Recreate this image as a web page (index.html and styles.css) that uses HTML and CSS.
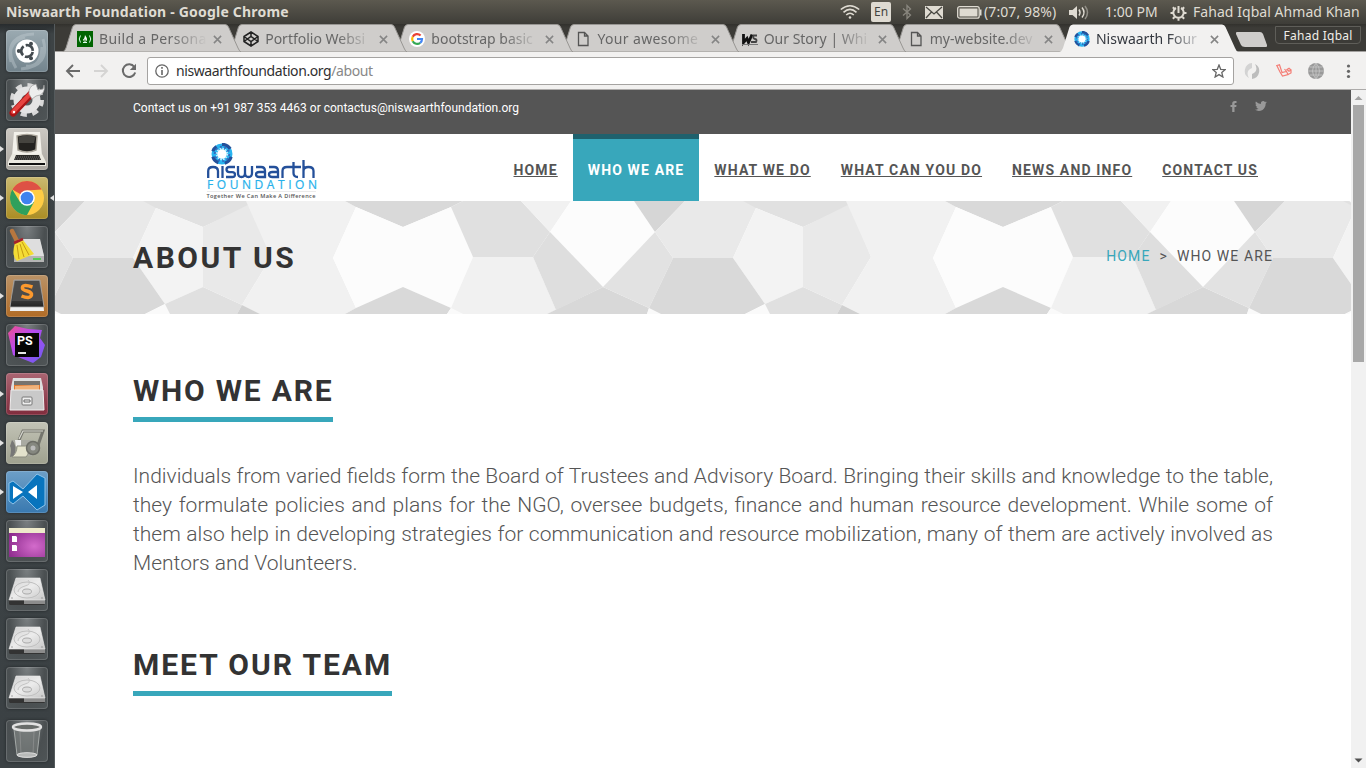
FILE: index.html
```html
<!DOCTYPE html>
<html lang="en">
<head>
<meta charset="utf-8">
<title>Niswaarth Foundation</title>
<link rel="stylesheet" href="styles.css">
</head>
<body>
<svg class="defs" width="0" height="0" aria-hidden="true">
  <defs>
    <linearGradient id="metal" x1="0" y1="0" x2="1" y2="1"><stop offset="0" stop-color="#cfcfcf"/><stop offset=".5" stop-color="#ececec"/><stop offset="1" stop-color="#c6c6c6"/></linearGradient>
    <linearGradient id="dark" x1="0" y1="0" x2="0" y2="1"><stop offset="0" stop-color="#777"/><stop offset="1" stop-color="#222"/></linearGradient>
    <radialGradient id="purple" cx=".7" cy=".6" r=".8"><stop offset="0" stop-color="#d36bcb"/><stop offset="1" stop-color="#8b2a8c"/></radialGradient>
    <linearGradient id="storm" x1="0" y1="0" x2="1" y2="1"><stop offset="0" stop-color="#f0508c"/><stop offset=".4" stop-color="#b84af0"/><stop offset="1" stop-color="#6a5cf0"/></linearGradient>
    <symbol id="tab" viewBox="0 0 180 28"><path d="M.5 28 Q3 27 4 24 L10.500 3 Q11.500 .5 14 .5 H163 Q165.500 .5 166.500 3 L176 24 Q177.500 27.500 179 28Z"/></symbol>
    <symbol id="close" viewBox="0 0 10 10"><path d="M1 1 9 9M9 1 1 9" stroke="#858585" stroke-width="1.700"/></symbol>
    <symbol id="page" viewBox="0 0 16 16"><path d="M3.500 1.500h6l3.500 3.500v9.500h-9.500zM9.500 1.500v3.500h3.500" fill="none" stroke="#555" stroke-width="1.300"/></symbol>
    <symbol id="ring" viewBox="0 0 24 24"><circle cx="12" cy="12" r="8.200" fill="none" stroke="#28b4f0" stroke-width="6.500"/><path d="M12 1.500A10.500 10.500 0 0 1 21 6.500M22 15A10.500 10.500 0 0 1 15 22M8 21.500A10.500 10.500 0 0 1 2 15M2 9A10.500 10.500 0 0 1 6 4" fill="none" stroke="#24519b" stroke-width="3.500"/><circle cx="12" cy="12" r="7.500" fill="none" stroke="#2f6dc0" stroke-width="3" stroke-dasharray="2 2.700"/><circle cx="12" cy="12" r="5.800" fill="none" stroke="#c0effc" stroke-width="2" stroke-dasharray="1.800 1.200"/><circle cx="12" cy="12" r="4.900" fill="#fff"/></symbol>
    <symbol id="disk" viewBox="0 0 42 42"><path d="M3 30H39V35L38 36H4L3 35z" fill="#333"/><path d="M18 31H39V35H18z" fill="#8c8c8c"/><path d="M10 9H34L39 31H3z" fill="url(#metal)" stroke="#eee" stroke-width=".6"/><ellipse cx="21" cy="21" rx="13" ry="8" fill="none" stroke="#c0c0c0"/><ellipse cx="21" cy="22.500" rx="4.500" ry="2.500" fill="#ddd" stroke="#aaa"/><path d="M22 11q4 4-3 6t-7 6" fill="none" stroke="#c4c4c4"/><circle cx="6" cy="29" r=".7" fill="#888"/><circle cx="36" cy="29" r=".7" fill="#888"/></symbol>
    <g id="tile">
      <path fill="#e9e9e9" d="M30 0H103L101 7 78 57H18L0 31Z"/>
      <path fill="#e1e1e1" d="M88 0H196L195 5 148 26 101 7Z"/>
      <path fill="#f3f3f3" d="M101 7 148 26V86L110 103 78 57Z"/>
      <path fill="#d9d9d9" d="M18 57H78L110 103 90 113H6L-6 107Z"/>
      <path fill="#fafafa" d="M110 103 90 113H118Z"/>
      <path fill="#e0e0e0" d="M148 86 110 103 115 113H182L187 104Z"/>
      <path fill="#e9e9e9" d="M148 26 195 3 216 56 187 104 148 86Z"/>
      <path fill="#f1f1f1" d="M191 0H290L301 6 278 57 301 107 290 113H205L187 104 216 56Z"/>
      <path fill="#d1d1d1" d="M187 104 205 113H182Z"/>
      <path fill="#d9d9d9" d="M290 0H408L396 6 348 26 301 6Z"/>
      <path fill="#fcfcfc" d="M301 6 348 26 396 6 418 56 396 107 348 86 301 107 278 57Z"/>
      <path fill="#d9d9d9" d="M348 86 396 107 392 113H290L301 107Z"/>
      <path fill="#fafafa" d="M396 107 392 113H408Z"/>
      <path fill="#e0e0e0" d="M408 0H466L495 31 478 56H418L396 6Z"/>
      <path fill="#f1f1f1" d="M466 0H516L495 31ZM418 56H478L501 109 492 113H408L396 107Z"/>
      <path fill="#fcfcfc" d="M516 0H579L600 31 548 86 495 31Z"/>
      <path fill="#dedede" d="M495 31 548 86 501 109 478 56Z"/>
      <path fill="#d8d8d8" d="M548 86 594 107 592 113H492Z"/>
      <path fill="#e2e2e2" d="M600 31 618 57 594 107 548 86Z"/>
      <path fill="#d6d6d6" d="M579 0H630L600 31Z"/>
      <path fill="#fafafa" d="M594 107 606 113H592Z"/>
    </g>
  </defs>
</svg>
<div class="desktop">
  <header class="panel">
    <span class="panel-title">Niswaarth Foundation - Google Chrome</span>
    <div class="tray">
      <svg class="t-wifi" width="20" height="16" viewBox="0 0 20 16" fill="none" stroke="#dfdbd2" stroke-width="1.600"><path d="M.8 5.500Q10-2 19.200 5.500M3.500 8.300Q10 2.500 16.500 8.300M6.200 11Q10 7.500 13.800 11"/><circle cx="10" cy="13.500" r="1.300" fill="#dfdbd2" stroke="none"/></svg>
      <span class="t-lang">En</span>
      <svg class="t-bt" width="10" height="16" viewBox="0 0 10 16" fill="none" stroke="#8a877f" stroke-width="1.300"><path d="M1 4.500 8.500 11 5 14.500V1.500L8.500 5 1 11.500"/></svg>
      <svg class="t-mail" width="18" height="13" viewBox="0 0 18 13"><path fill="#dfdbd2" d="M0 0H18V13H0z"/><path d="M1 1 9 8 17 1M1 12 6.500 6M17 12 11.500 6" fill="none" stroke="#4a4943" stroke-width="1.300"/></svg>
      <svg class="t-bat" width="25" height="13" viewBox="0 0 25 13"><rect x=".7" y=".7" width="21.500" height="11.500" rx="2" fill="none" stroke="#dfdbd2" stroke-width="1.300"/><path fill="#dfdbd2" d="M2.500 2.500H20.500V10.500H2.500zM23 3.500h1.500v6H23z"/></svg>
      <span class="t-charge">(7:07, 98%)</span>
      <svg class="t-vol" width="20" height="15" viewBox="0 0 20 15"><path fill="#dfdbd2" d="M0 5h3.500L8 1v13L3.500 10H0z"/><path d="M10 4.500q2 3 0 6M13 2.500q4 5 0 10" fill="none" stroke="#dfdbd2" stroke-width="1.500"/><path d="M16 1q5 6.500 0 13" fill="none" stroke="#918e86" stroke-width="1.500"/></svg>
      <span class="t-time">1:00 PM</span>
      <svg class="t-gear" width="17" height="17" viewBox="0 0 17 17" fill="none" stroke="#dfdbd2"><path stroke-width="2" d="M6 4A5.200 5.200 0 1 0 11 4M8.500 2V9"/><path stroke-width="2" d="M.5 9H3M14 9h2.500M8.500 14.300v2.500M2.800 3.300 4.600 5M14.200 3.300 12.400 5M2.800 14.700 4.600 13M14.200 14.700 12.400 13"/></svg>
      <span class="t-user">Fahad Iqbal Ahmad Khan</span>
    </div>
  </header>

  <aside class="launcher">
    <div class="app dash"><svg viewBox="0 0 42 42"><path d="M5 32Q-1 5 28 4M10 38Q-4 14 19 7M37 9Q45 36 15 39M36 17Q35 38 20 36" stroke="#c6d0d4" stroke-width="3" opacity=".4" fill="none"/><circle cx="21" cy="21" r="11.500" fill="#fff"/><circle cx="21" cy="21" r="5.800" fill="none" stroke="#444b50" stroke-width="2.700" stroke-dasharray="10 2.150" transform="rotate(10 21 21)"/><g fill="#444b50"><circle cx="12.800" cy="21" r="2"/><circle cx="25" cy="13.800" r="2"/><circle cx="25" cy="28.200" r="2"/></g></svg></div>
    <div class="app"><svg viewBox="0 0 42 42"><circle cx="21" cy="21" r="14.500" fill="none" stroke="#d8d8d8" stroke-width="5" stroke-dasharray="6 5.390"/><circle cx="21" cy="21" r="9.500" fill="none" stroke="#e4e4e4" stroke-width="8"/><path d="M7 34 26 14" stroke="#a91516" stroke-width="7" stroke-linecap="round"/><path d="M7 33 25 14" stroke="#e74440" stroke-width="4" stroke-linecap="round"/><path d="M23 15Q22 7 30 5l2 6 5-1 1-4Q40 16 30 17l-4 3z" fill="#eee" stroke="#999" stroke-width=".7"/><circle cx="8" cy="33" r="1.200" fill="#fff"/></svg></div>
    <div class="app run silver"><svg viewBox="0 0 42 42"><path d="M8 4H34L36 28H6z" fill="#f3f1ea"/><path d="M11 8Q21 5 31 8L30 22Q21 26 12 22z" fill="#23221f" stroke="#aaa59a" stroke-width="1.500"/><path d="M12.500 9Q21 6.500 29.500 9L28 15H13z" fill="#45443f"/><path d="M6 26H36L40 34V38H2V34z" fill="#ebe9e0"/><path d="M10 27H33L35 32H8z" fill="#2e2d29"/><path d="M3 36H39" stroke="#111" stroke-width="2"/><path d="M10 29h24M9 31h26" stroke="#666" stroke-dasharray="1 1"/></svg></div>
    <div class="app run focus gold"><svg viewBox="0 0 42 42"><circle cx="21" cy="21" r="17" fill="#fc4"/><path d="M21 21 6.300 12.500A17 17 0 0 1 35.700 12.500L21 13.500z" fill="#de5145"/><path d="M6.300 12.500A17 17 0 0 0 21 38L28 25 14 25z" fill="#2fa05c"/><circle cx="21" cy="21" r="7.800" fill="#fff"/><circle cx="21" cy="21" r="6.300" fill="#3f82ee"/></svg></div>
    <div class="app"><svg viewBox="0 0 42 42"><path d="M9 15H34L38 30V36H8z" fill="#b5b5b5"/><path d="M9 13H34L38 30H9z" fill="#dedede"/><path d="M27 32h8v2h-8z" fill="#5c5"/><path d="M6 5 12 17" stroke="#b7773f" stroke-width="4.500" stroke-linecap="round"/><path d="M9 17 17 14 28 28 11 35Q5 30 9 17z" fill="#f4dc35"/><path d="M11 19 13 33M14 18 18 31M16 16 23 29" stroke="#c49a13"/><path d="M8 17 17 13" stroke="#a4212b" stroke-width="2.500"/></svg></div>
    <div class="app run orange"><svg viewBox="0 0 42 42"><path d="M5 25 4 36H38L37 25z" fill="#eee"/><path d="M8 5H34L38 32H4z" fill="url(#dark)" stroke="#aaa" stroke-width=".8"/><path d="M9 6H33L36 26H6z" fill="#4b4b4b"/><path d="M26.500 12Q15.500 8.500 16.500 13.500Q17 15 21 16Q26 17.500 25.500 20Q24 24.500 15.500 21" fill="none" stroke="#fb982d" stroke-width="3.500"/></svg></div>
    <div class="app"><svg viewBox="0 0 42 42"><path d="M2 9 9 2 22 5 36 6 34 14 39 21 35 33 27 39 7 31z" fill="url(#storm)"/><path d="M9 9H33V33H9z" fill="#050505"/><path d="M12 29H20" stroke="#fff" stroke-width="1.800"/><text class="ps" x="11" y="21">PS</text></svg></div>
    <div class="app run red"><svg viewBox="0 0 42 42"><path d="M7 5H35L37 14V37H5V14z" fill="#ddd"/><path d="M8 8H34V17H8z" fill="#77736e"/><path d="M8 12H34V18H8z" fill="#df762e"/><path d="M9 13 33 12V17H9z" fill="#f0b27a"/><path d="M5 17H37L38 37H4z" fill="#c9c9c9" stroke="#eee"/><rect x="16" y="24" width="10" height="8" rx="1" fill="#eee" stroke="#777"/><path d="M18 27H24V29H18z" fill="#fff" stroke="#666"/></svg></div>
    <div class="app run olive"><svg viewBox="0 0 42 42"><path d="M13 18 17 9H37L31 26" fill="none" stroke="#74756d" stroke-width="3"/><path d="M13 17 17 9H37" fill="none" stroke="#d8d9d0" stroke-width="1.200"/><path d="M6 18H26Q30 24 26 34H9Q14 25 6 18z" fill="#a9aaa2"/><path d="M9 18H15V25H10z" fill="#eee"/><path d="M6 18Q12 24 8 34L4 35Q6 27 4 24z" fill="#777"/><path d="M11 24H22Q24 31 20 35H6Q11 31 11 24z" fill="#e3e2cc" stroke="#8b8c80"/><circle cx="27" cy="26" r="6.500" fill="#85877f" stroke="#6c6d66" stroke-width="1.500"/><circle cx="27" cy="26" r="2.500" fill="#bbb"/></svg></div>
    <div class="app run blue"><svg viewBox="0 0 42 42"><path d="M3 12 7 10 17 18 31 3 39 7V34L31 39 17 25 7 33 3 30z" fill="#0874bd" stroke="#8fc4ea" stroke-width="1"/><path d="M7 15V28L17 21zM31 14V28L22 21z" fill="#fff"/></svg></div>
    <div class="app"><svg viewBox="0 0 42 42"><path d="M3 10H39V37H3z" fill="url(#purple)"/><path d="M3 8H39V13H3z" fill="#eeeacb"/><path d="M6 16h4l1 1v5H6zM6 25h4l1 1v5H6z" fill="#fff"/></svg></div>
    <div class="app"><svg viewBox="0 0 42 42"><use href="#disk"/></svg></div>
    <div class="app"><svg viewBox="0 0 42 42"><use href="#disk"/></svg></div>
    <div class="app"><svg viewBox="0 0 42 42"><use href="#disk"/></svg></div>
    <div class="app trash"><svg viewBox="0 0 42 42"><path d="M8 9H34L31 35Q21 40 11 35z" fill="#7c817f" fill-opacity=".65" stroke="#a4a9a7"/><path d="M14 12 15 34M28 12 27 34" stroke="#aaa" opacity=".4"/><ellipse cx="21" cy="7" rx="14" ry="3.500" fill="#686c6a" stroke="#e2e2e2" stroke-width="2.400"/><ellipse cx="21" cy="35" rx="10" ry="2.300" fill="#b7b9b8" stroke="#ddd"/></svg></div>
  </aside>

  <section class="browser">
    <div class="tabs">
      <div class="tab wide"><svg class="shape"><use href="#tab"/></svg><svg class="fav" viewBox="0 0 16 16"><path fill="#006400" d="M0 0H16V16H0z"/><path d="M3.500 4.500Q1 8 3.500 11.500M12.500 4.500Q15 8 12.500 11.500M6 11.500h4" fill="none" stroke="#dfe"/><path d="M8 4Q10 6.500 10 9L9 10.500H7L6 8.500Q7.500 8 8 4z" fill="#fff"/><path d="M8 7.500 8.700 10H7.300z" fill="#006400"/></svg><span>Build a Persona</span><svg class="x"><use href="#close"/></svg></div>
      <div class="tab"><svg class="shape"><use href="#tab"/></svg><svg class="fav" viewBox="0 0 16 16"><path d="M8 1 15 5.500V10.500L8 15 1 10.500V5.500zM1 5.500 8 10.500 15 5.500M1 10.500 8 5.500 15 10.500M8 1V5.500M8 10.500V15" fill="none" stroke="#222" stroke-width="1.500"/></svg><span>Portfolio Websi</span><svg class="x"><use href="#close"/></svg></div>
      <div class="tab"><svg class="shape"><use href="#tab"/></svg><svg class="fav" viewBox="0 0 16 16"><circle cx="8" cy="8" r="8" fill="#fff"/><g fill="none" stroke-width="2.200"><path stroke="#ea4335" d="M3.700 5.800A5 5 0 0 1 11.600 4.500"/><path stroke="#fbbc05" d="M3.700 5.800A5 5 0 0 0 3.700 10.300"/><path stroke="#34a853" d="M3.700 10.300A5 5 0 0 0 11.200 11.800"/><path stroke="#4285f4" d="M11.200 11.800Q13 10.500 13 8H8"/></g></svg><span>bootstrap basic</span><svg class="x"><use href="#close"/></svg></div>
      <div class="tab wide"><svg class="shape"><use href="#tab"/></svg><svg class="fav"><use href="#page"/></svg><span>Your awesome</span><svg class="x"><use href="#close"/></svg></div>
      <div class="tab"><svg class="shape"><use href="#tab"/></svg><svg class="fav" viewBox="0 0 16 16"><path d="M1.500 3V11.500L5 7.500 6.500 11.500 10 3.500" fill="none" stroke="#111" stroke-width="2.800"/><path d="M15 4.500H11.500Q10.500 7.500 13 8T14 11H9" fill="none" stroke="#444" stroke-width="1.800"/><path d="M0 13.500H16" stroke="#777"/></svg><span>Our Story | Whi</span><svg class="x"><use href="#close"/></svg></div>
      <div class="tab"><svg class="shape"><use href="#tab"/></svg><svg class="fav"><use href="#page"/></svg><span>my-website.dev</span><svg class="x"><use href="#close"/></svg></div>
      <div class="tab active"><svg class="shape"><use href="#tab"/></svg><svg class="fav"><use href="#ring"/></svg><span>Niswaarth Four</span><svg class="x"><use href="#close"/></svg></div>
      <svg class="newtab" width="34" height="17" viewBox="0 0 34 17"><path d="M2 1H25Q27 1 28 3L32 14Q32.500 16 31 16H10Q7 16 6 14L1 3Q.5 1 2 1z" fill="#cfcdcb"/></svg>
      <span class="profile">Fahad Iqbal</span>
    </div>

    <div class="toolbar">
      <svg class="nav-i" viewBox="0 0 16 16"><path d="M15 8H2M8 2 2 8 8 14" fill="none" stroke="#6a6a6a" stroke-width="1.900"/></svg>
      <svg class="nav-i" viewBox="0 0 16 16"><path d="M1 8H14M8 2 14 8 8 14" fill="none" stroke="#d5d4d3" stroke-width="1.900"/></svg>
      <svg class="nav-i" viewBox="0 0 16 16"><path d="M13.300 4A6.300 6.300 0 1 0 14.200 9.500" fill="none" stroke="#6a6a6a" stroke-width="2"/><path d="M15 .8V7H8.800z" fill="#6a6a6a"/></svg>
      <div class="address">
        <svg width="14" height="14" viewBox="0 0 14 14"><circle cx="7" cy="7" r="6.200" fill="none" stroke="#666" stroke-width="1.300"/><path d="M7 6V11M7 3V4.700" stroke="#666" stroke-width="1.600"/></svg>
        <span class="url">niswaarthfoundation.org<i>/about</i></span>
        <svg width="14" height="14" viewBox="0 0 14 14"><path d="M7 1 8.700 5.300 13.300 5.600 9.800 8.600 10.900 13 7 10.600 3.100 13 4.200 8.600 .7 5.600 5.300 5.300z" fill="none" stroke="#666" stroke-width="1.300"/></svg>
      </div>
      <svg class="ext" viewBox="0 0 16 16"><path d="M8 0A8 8 0 0 0 5 15Q1 8 8 5z" fill="#d3d3d3"/><path d="M8 16A8 8 0 0 0 11 1Q15 8 8 11z" fill="#bdbdbd"/></svg>
      <svg class="ext" viewBox="0 0 16 16"><path d="M.8 2.500 3.500 1.800 6 9.500 10.500 8.500 12 11.500 6.500 13 4 9zM10.500 8.500 8.500 6M11 6.500 13 5.300 15 7 13 8.300zM12 11.500 15 10V7" fill="none" stroke="#f47e76" stroke-width="1.200"/></svg>
      <svg class="ext" viewBox="0 0 16 16"><circle cx="8" cy="8" r="8" fill="#999"/><path d="M0 8H16M8 0V16M1.500 4H14.500M1.500 12H14.500M8 0Q1 8 8 16Q15 8 8 0" fill="none" stroke="#c8c8c8" stroke-width=".8"/></svg>
      <svg class="ext" viewBox="0 0 16 16" fill="#666"><circle cx="8.500" cy="3" r="1.600"/><circle cx="8.500" cy="8.300" r="1.600"/><circle cx="8.500" cy="13.500" r="1.600"/></svg>
    </div>

    <div class="viewport">
      <main class="site">
        <div class="contact">
          <span>Contact us on +91 987 353 4463 or contactus@niswaarthfoundation.org</span>
          <div class="social">
            <svg width="7" height="11" viewBox="0 0 7 11"><path fill="#999" d="M6.500 0V2H5.300Q4.500 2 4.500 2.800V4H6.500L6.200 6H4.500V11H2.200V6H.5V4H2.200V2.500Q2.200 0 4.800 0z"/></svg>
            <svg width="12" height="10" viewBox="0 0 12 10"><path fill="#999" d="M12 1.200 10.700 2.600Q10.500 7 7.500 8.900 3.600 11 0 8.800 2 8.800 3.500 7.800 1.800 7.500 1.300 6.100H2.300Q.5 5.400.5 3.600L1.500 3.900Q-.1 2.400.9.500 3 2.900 5.900 3 5.600 1 7.200.3 8.800-.3 9.900.9L11.500.4 10.500 1.600z"/></svg>
          </div>
        </div>
        <div class="masthead">
          <svg class="logo" width="112" height="60" viewBox="0 0 112 60">
            <use href="#ring" x="5" y="3" width="22" height="22"/>
            <g fill="none" stroke="#24509a" stroke-width="2.300" transform="translate(0 2)">
              <path d="M2.200 36V29Q2.200 25 7 25T12 29V36M16.500 24V36M29 25H23.500Q20.500 25 20.500 27.500T23.500 30.200H26Q29 30.200 29 32.700T26 35H20M32 24V31Q32 35 35.500 35T39 31V24M39 31Q39 35 42.500 35T46 31V24M50 25H55Q59 25 59 29V35H53.500Q50 35 50 32.500T53.500 30H59M63 25H68Q72 25 72 29V35H66.500Q63 35 63 32.500T66.500 30H72M76.500 36V29Q76.500 25 81 25H95M87.500 20V31Q87.500 35 92 35M97.500 18V36M97.500 29Q97.500 25 102.500 25T107.500 29V36"/>
            </g>
            <text class="logo-sub" x="1" y="49" textLength="110">FOUNDATION</text>
            <path d="M1 51.500H110" stroke="#e3e3e3" stroke-width=".7"/>
            <text class="logo-tag" x=".5" y="57.700" textLength="109">Together We Can Make A Difference</text>
          </svg>
          <nav><a>HOME</a><a class="current">WHO WE ARE</a><a>WHAT WE DO</a><a>WHAT CAN YOU DO</a><a>NEWS AND INFO</a><a>CONTACT US</a></nav>
        </div>
        <div class="banner">
          <svg class="mosaic" width="1296" height="113" viewBox="0 0 1296 113"><use href="#tile" x="-600"/><use href="#tile"/><use href="#tile" x="600"/><use href="#tile" x="1200"/></svg>
          <h1>ABOUT US</h1>
          <p class="crumbs"><b>HOME</b><em>&gt;</em>WHO WE ARE</p>
        </div>
        <article>
          <h2 class="who">WHO WE ARE</h2>
          <p>Individuals from varied fields form the Board of Trustees and Advisory Board. Bringing their skills and knowledge to the table, they formulate policies and plans for the NGO, oversee budgets, finance and human resource development. While some of them also help in developing strategies for communication and resource mobilization, many of them are actively involved as Mentors and Volunteers.</p>
          <h2>MEET OUR TEAM</h2>
        </article>
      </main>
      <div class="scrollbar"><svg width="15" height="15"><path d="M3.500 10 7.500 6 11.500 10z" fill="#a3a3a3"/></svg><div class="thumb"></div><svg class="down" width="15" height="15"><path d="M3.500 5.500 7.500 9.500 11.500 5.500z" fill="#505050"/></svg></div>
    </div>
  </section>
</div>
</body>
</html>
```

FILE: styles.css
```css
* { box-sizing: border-box; }
body { margin: 0; width: 1366px; height: 768px; overflow: hidden; font-family: "Noto Sans", sans-serif; }
svg { display: block; flex: none; }
.defs { position: absolute; }
.desktop { display: grid; grid-template: 24px 744px / 55px 1311px; }

.panel { grid-column: 1 / 3; display: flex; align-items: center; justify-content: space-between; padding: 0 5px 0 6px; background: linear-gradient(#5c594f, #3e3d38); color: #dfdbd2; font-size: 14px; white-space: nowrap; }
.panel-title { font-weight: 700; font-size: 14px; letter-spacing: .2px; line-height: 24px; height: 24px; }
.tray { display: flex; align-items: center; height: 24px; letter-spacing: 0; line-height: 20px; }
.t-lang { margin-left: 11px; width: 20px; height: 20px; border-radius: 2px; background: #dfdbd2; color: #45443f; font-size: 12px; text-align: center; }
.t-bt { margin-left: 11px; }
.t-mail { margin-left: 13px; }
.t-bat { margin-left: 14px; }
.t-charge { margin-left: 2px; width: 74px; letter-spacing: .1px; }
.t-vol { margin-left: 11px; }
.t-time { margin-left: 16px; width: 53px; }
.t-gear { margin-left: 12px; }
.t-user { margin-left: 6px; width: 168px; letter-spacing: .05px; }

.launcher { background: linear-gradient(#282c2e, #3d4345 10px, #3b4144); border-right: 1px solid #555b5d; padding: 6px 0 0 6px; display: flex; flex-direction: column; gap: 7px; }
.app { position: relative; width: 42px; height: 42px; flex: none; border-radius: 4px; background: radial-gradient(ellipse at 50% 0, #7b8082, #4a4f51 60%, #4f5557); box-shadow: 0 0 3px #202426, inset 0 0 0 1px #ffffff26; }
.app svg { width: 42px; height: 42px; }
.dash { background: linear-gradient(#9baab1, #73848d); }
.silver { background: linear-gradient(#ccc9c3, #aaa69f); }
.gold { background: linear-gradient(#cab970, #ab8d24); }
.orange { background: linear-gradient(#b99267, #b16c27); }
.red { background: linear-gradient(#aa6572, #812c3d); }
.olive { background: linear-gradient(#c2c3b6, #9fa18f); }
.blue { background: linear-gradient(#6d9fc7, #3979b0); }
.trash { margin-top: 4px; }
.run::before { content: ""; position: absolute; left: -6px; top: 18px; border: 3px solid transparent; border-left: 4px solid #e2e2e2; border-right: 0; }
.focus::after { content: ""; position: absolute; right: -6px; top: 18px; border: 3px solid transparent; border-right: 4px solid #e2e2e2; border-left: 0; }
.ps { font: 700 12.500px Roboto, sans-serif; fill: #fff; }

.browser { display: grid; grid-template-rows: 28px 38px 678px; min-width: 0; }
.tabs { position: relative; display: flex; padding-left: 7px; background: linear-gradient(#32312d, #3c3b37 4px); border-bottom: 1px solid #a3a19f; }
.tab { position: relative; display: flex; align-items: center; width: 166.170px; flex: none; height: 28px; padding: 2px 0 0 15px; font-size: 14px; letter-spacing: 0; color: #666; }
.tab.wide { letter-spacing: .35px; }
.shape { position: absolute; left: 0; top: 0; width: 180px; height: 28px; fill: #cfcdcb; stroke: #989693; stroke-width: 1; }
.tab:nth-child(1) { z-index: 7; }
.tab:nth-child(2) { z-index: 6; }
.tab:nth-child(3) { z-index: 5; }
.tab:nth-child(4) { z-index: 4; }
.tab:nth-child(5) { z-index: 3; }
.tab:nth-child(6) { z-index: 2; }
.tab.active { z-index: 9; color: #34383f; }
.active .shape { fill: #f2f1f0; stroke: none; }
.fav { position: relative; width: 16px; height: 16px; }
.tab span { position: relative; margin-left: 6px; width: 108px; line-height: 26px; white-space: nowrap; -webkit-mask-image: linear-gradient(90deg, #000 72px, transparent 108px); mask-image: linear-gradient(90deg, #000 72px, transparent 108px); }
.x { position: relative; width: 9px; height: 9px; margin-left: 6px; }
.newtab { margin: 7px 0 0 10px; }
.profile { margin: 2px 0 0 6px; width: 86px; height: 18px; border: 1px solid #5f5e59; border-radius: 0 0 4px 4px; color: #f0eee9; font-size: 12px; letter-spacing: .25px; line-height: 17px; text-align: center; white-space: nowrap; }

.toolbar { display: flex; align-items: center; padding: 0 9px 0 10px; background: #f2f1f0; border-bottom: 1px solid #adabaa; }
.nav-i { width: 16px; height: 16px; margin-right: 12px; }
.nav-i:nth-child(3) { margin-right: 10px; }
.address { display: flex; align-items: center; width: 1087px; height: 28px; flex: none; border: 1px solid #a5a3a1; border-radius: 3px; background: #fff; padding: 0 7px; }
.url { flex: 1; margin-left: 7px; font-size: 14px; letter-spacing: -.4px; line-height: 26px; color: #303030; }
.url i { font-style: normal; color: #888; }
.ext { width: 16px; height: 16px; margin-left: 16px; }
.address + .ext { margin-left: 10px; }

.viewport { display: grid; grid-template-columns: 1296px 15px; background: #fff; }
.site { font-family: Roboto, sans-serif; color: #555; }
.contact { height: 44px; padding: 0 84px 0 78px; background: #555; color: #fff; display: flex; justify-content: space-between; font-size: 12px; line-height: 36px; }
.social { display: flex; gap: 18px; padding-top: 11px; }
.masthead { height: 67px; padding: 0 78px 0 151px; display: flex; justify-content: space-between; }
.logo { margin-top: 6px; }
.logo-sub { font: 12px "Open Sans", sans-serif; fill: #26b1eb; stroke: #26b1eb; stroke-width: .2px; }
.logo-tag { font: 600 5.600px "Open Sans", sans-serif; fill: #555; }
nav { display: flex; }
nav a { padding: 0 15px; border-top: 5px solid transparent; line-height: 62px; font-size: 14px; font-weight: 700; letter-spacing: 1.145px; text-decoration: underline; white-space: nowrap; }
nav .current { background: #38a7bb; border-color: #1f616d; color: #fff; text-decoration: none; }
.banner { display: grid; grid-template: 113px / 1fr auto; width: 1296px; padding: 0 78px; }
.mosaic { grid-area: 1 / 1 / 2 / 3; width: 1296px; margin: 0 -78px; overflow: hidden; border-radius: 0 3px 3px 0; }
h1, h2 { margin: 0; color: #333; font-size: 30px; line-height: 33px; font-weight: 700; letter-spacing: 1.950px; }
h1 { grid-area: 1 / 1; padding-top: 40px; z-index: 1; letter-spacing: 2.500px; }
.crumbs { grid-area: 1 / 2; margin: 0; padding-top: 45px; font-size: 14px; line-height: 20px; letter-spacing: 1.100px; white-space: nowrap; z-index: 1; }
.crumbs b { color: #38a7bb; font-weight: 400; }
.crumbs em { font-style: normal; margin: 0 9px; }
article { padding: 60px 78px 0; }
h2 { width: max-content; height: 48px; border-bottom: 5px solid #38a7bb; }
.who { letter-spacing: 1.800px; }
article p { margin: 40px 0 70px; font-size: 21px; font-weight: 300; line-height: 29px; text-align: justify; }
.scrollbar { display: flex; flex-direction: column; background: #f1f1f1; }
.thumb { width: 11px; height: 257px; margin-left: 2px; background: #a8a8a8; }
.down { margin-top: auto; }
```
